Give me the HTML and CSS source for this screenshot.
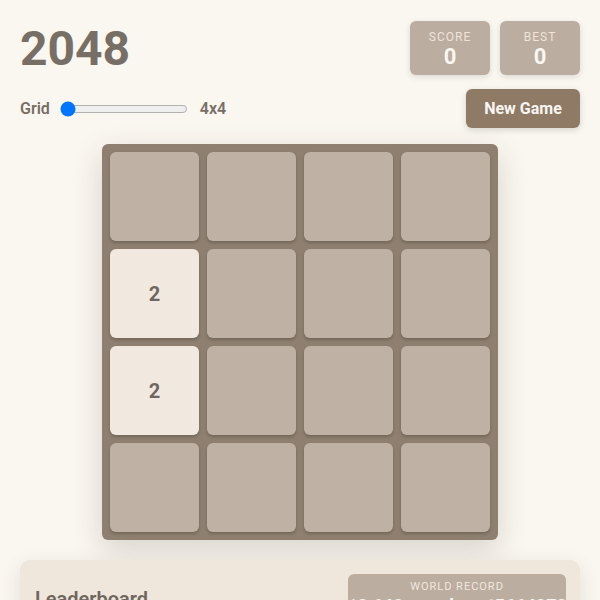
FILE: index.html
```html
<!DOCTYPE html>
<html lang="en">
<head>
<meta charset="utf-8">
<title>2048</title>
<link rel="stylesheet" href="styles.css">
</head>
<body>
<main class="app">
  <header class="top">
    <h1 class="title">2048</h1>
    <div class="scores">
      <div class="score-box">
        <span class="score-label">SCORE</span>
        <span class="score-value">0</span>
      </div>
      <div class="score-box">
        <span class="score-label">BEST</span>
        <span class="score-value">0</span>
      </div>
    </div>
  </header>

  <div class="controls">
    <label class="grid-size">
      <span class="grid-label">Grid</span>
      <input class="grid-range" type="range" min="4" max="8" value="4">
      <span class="grid-value">4x4</span>
    </label>
    <button class="new-game" type="button">New Game</button>
  </div>

  <section class="board">
    <div class="tile"></div>
    <div class="tile"></div>
    <div class="tile"></div>
    <div class="tile"></div>
    <div class="tile tile-2">2</div>
    <div class="tile"></div>
    <div class="tile"></div>
    <div class="tile"></div>
    <div class="tile tile-2">2</div>
    <div class="tile"></div>
    <div class="tile"></div>
    <div class="tile"></div>
    <div class="tile"></div>
    <div class="tile"></div>
    <div class="tile"></div>
    <div class="tile"></div>
  </section>

  <section class="leaderboard">
    <h2 class="lb-title">Leaderboard</h2>
    <div class="record">
      <span class="record-label">WORLD RECORD</span>
      <span class="record-value">12,648 – gudmast5664373</span>
    </div>
  </section>
</main>
</body>
</html>
```

FILE: styles.css
```css
* {
  box-sizing: border-box;
}

body {
  margin: 0;
  background: #faf7f0;
  color: #776e65;
  font-family: Roboto, "Liberation Sans", Arial, sans-serif;
}

.app {
  width: 560px;
  margin: 0 auto;
  padding: 20px 0;
}

/* Title and score boxes */
.top {
  display: flex;
  justify-content: space-between;
  align-items: flex-start;
}

.title {
  margin: 0;
  font-size: 48px;
  font-weight: 700;
  line-height: normal;
  color: #776e65;
}

.scores {
  display: flex;
  gap: 10px;
  padding-top: 1px;
}

.score-box {
  width: 80px;
  height: 54px;
  padding-top: 2px;
  border-radius: 6px;
  background: #bbada0;
  display: flex;
  flex-direction: column;
  align-items: center;
  justify-content: center;
  gap: 1px;
  box-shadow: 0 2px 6px rgba(0, 0, 0, 0.12);
}

.score-label {
  font-size: 12px;
  letter-spacing: 1px;
  color: #eee4da;
  line-height: 14px;
}

.score-value {
  font-size: 22px;
  font-weight: 700;
  color: #f9f6f2;
  line-height: 24px;
}

/* Grid size slider and restart button */
.controls {
  display: flex;
  justify-content: space-between;
  align-items: center;
  margin-top: 12px;
}

.grid-size {
  display: flex;
  align-items: center;
  gap: 8px;
  font-size: 16px;
  font-weight: 600;
  color: #776e65;
}

.grid-range {
  width: 128px;
  margin: 2px;
}

.grid-value {
  margin-left: 2px;
}

.new-game {
  width: 114px;
  height: 39px;
  border: none;
  border-radius: 6px;
  background: #8f7a66;
  color: #f9f6f2;
  font-family: inherit;
  font-size: 16px;
  font-weight: 700;
  box-shadow: 0 2px 6px rgba(0, 0, 0, 0.15);
}

/* Board */
.board {
  width: 396px;
  margin: 16px auto 0;
  padding: 8px;
  display: grid;
  grid-template-columns: repeat(4, 89px);
  grid-auto-rows: 89px;
  gap: 8px;
  background: #8e7f70;
  border-radius: 6px;
  box-shadow: 0 10px 30px rgba(60, 50, 40, 0.18);
}

.tile {
  border-radius: 6px;
  background: #bfb2a5;
  box-shadow: 0 2px 3px rgba(40, 30, 20, 0.25);
  display: flex;
  align-items: center;
  justify-content: center;
  font-size: 20px;
  font-weight: 700;
  color: #6f665e;
}

.tile-2 {
  background: #f1e9e0;
}

/* Leaderboard */
.leaderboard {
  margin-top: 20px;
  padding: 14px 14px 14px 15px;
  background: #efe6dc;
  border-radius: 10px;
  display: flex;
  justify-content: space-between;
  align-items: center;
  box-shadow: 0 6px 20px rgba(60, 50, 40, 0.12);
}

.lb-title {
  margin: 0;
  font-size: 20px;
  font-weight: 600;
  color: #6f665e;
}

.record {
  width: 218px;
  padding: 6px 10px;
  border-radius: 6px;
  background: #bbada0;
  display: flex;
  flex-direction: column;
  align-items: center;
}

.record-label {
  font-size: 11px;
  letter-spacing: 1px;
  color: #f0e8de;
  line-height: 14px;
}

.record-value {
  font-size: 18px;
  font-weight: 700;
  color: #f9f6f2;
  line-height: 24px;
  white-space: nowrap;
}
```
